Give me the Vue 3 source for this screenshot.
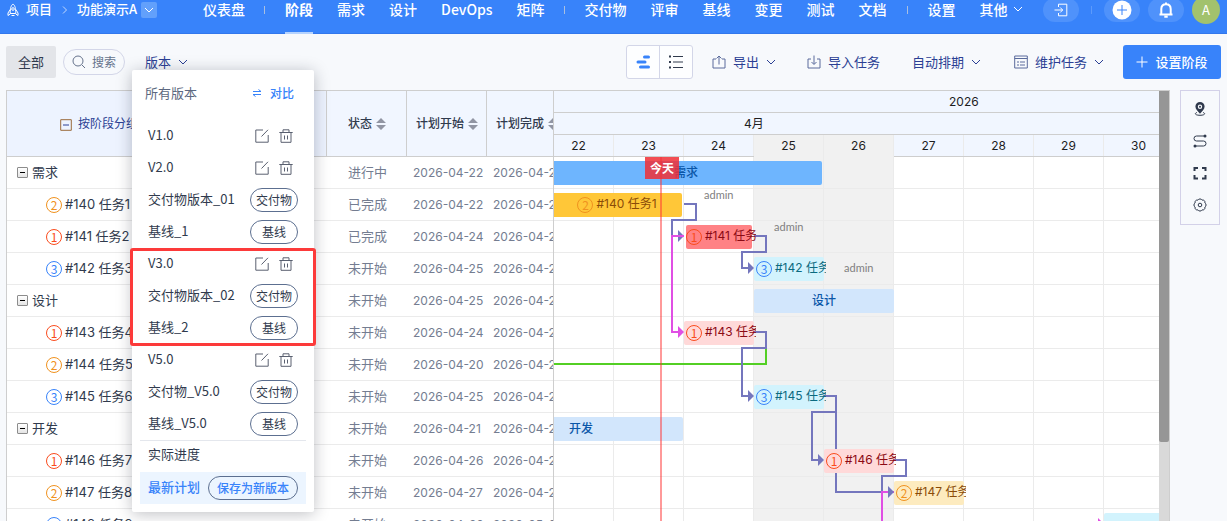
<script setup>
import { ref } from 'vue'

const nav = [
  ['仪表盘'],
  ['阶段', '需求', '设计', 'DevOps', '矩阵'],
  ['交付物', '评审', '基线', '变更', '测试', '文档'],
  ['设置', '其他'],
]
const search = ref('')

const rows = [
  { stage: '需求', status: '进行中', start: '2026-04-22', end: '2026-04-25' },
  { no: 2, id: '#140', name: '任务', n: 1, status: '已完成', start: '2026-04-22', end: '2026-04-23' },
  { no: 1, id: '#141', name: '任务', n: 2, status: '已完成', start: '2026-04-24', end: '2026-04-24' },
  { no: 3, id: '#142', name: '任务', n: 3, status: '未开始', start: '2026-04-25', end: '2026-04-25' },
  { stage: '设计', status: '未开始', start: '2026-04-25', end: '2026-04-26' },
  { no: 1, id: '#143', name: '任务', n: 4, status: '未开始', start: '2026-04-24', end: '2026-04-24' },
  { no: 2, id: '#144', name: '任务', n: 5, status: '未开始', start: '2026-04-20', end: '2026-04-20' },
  { no: 3, id: '#145', name: '任务', n: 6, status: '未开始', start: '2026-04-25', end: '2026-04-25' },
  { stage: '开发', status: '未开始', start: '2026-04-21', end: '2026-04-23' },
  { no: 1, id: '#146', name: '任务', n: 7, status: '未开始', start: '2026-04-26', end: '2026-04-26' },
  { no: 2, id: '#147', name: '任务', n: 8, status: '未开始', start: '2026-04-27', end: '2026-04-27' },
  { no: 3, id: '#148', name: '任务', n: 9, status: '未开始', start: '2026-04-30', end: '2026-05-03' },
]

const days = [22, 23, 24, 25, 26, 27, 28, 29, 30]

const bars = [
  { row: 0, x: 6, w: 272, kind: 'stage-on', label: '需求' },
  { row: 1, x: 6, w: 132, kind: 'amber', no: 2, id: '#140', n: '1', wide: true },
  { row: 2, x: 142, w: 66, kind: 'red', no: 1, id: '#141', n: '' },
  { row: 3, x: 210, w: 70, kind: 'cyan', no: 3, id: '#142', n: '' },
  { row: 4, x: 210, w: 140, kind: 'stage', label: '设计' },
  { row: 5, x: 140, w: 70, kind: 'pink', no: 1, id: '#143', n: '' },
  { row: 7, x: 210, w: 70, kind: 'cyan', no: 3, id: '#145', n: '' },
  { row: 8, x: -65, w: 204, kind: 'stage', label: '开发' },
  { row: 9, x: 280, w: 70, kind: 'pink', no: 1, id: '#146', n: '' },
  { row: 10, x: 350, w: 70, kind: 'sand', no: 2, id: '#147', n: '' },
  { row: 11, x: 560, w: 280, kind: 'cyan', label: '' },
]
const owners = [
  { x: 160, y: 30 },
  { x: 230, y: 62 },
  { x: 300, y: 103 },
]

const versions = [
  { name: 'V1.0' },
  { name: 'V2.0' },
  { name: '交付物版本_01', tag: '交付物' },
  { name: '基线_1', tag: '基线' },
  { name: 'V3.0' },
  { name: '交付物版本_02', tag: '交付物' },
  { name: '基线_2', tag: '基线' },
  { name: 'V5.0' },
  { name: '交付物_V5.0', tag: '交付物' },
  { name: '基线_V5.0', tag: '基线' },
]
const groups = [versions.slice(0, 4), versions.slice(4, 7), versions.slice(7)]
</script>

<template>
  <div class="page">
    <header class="top">
      <div class="top-in">
        <svg class="logo" viewBox="0 0 12 14" width="12" height="14">
          <path d="M6 1C4 2.500 3.200 5 3.200 10.500H8.800C8.800 5 8 2.500 6 1ZM3.200 6.500L1 10V12.500L3.200 11M8.800 6.500L11 10V12.500L8.800 11M4.500 12.500H7.500" />
          <circle cx="6" cy="6" r="1.300" />
        </svg>
        <a href="#" class="crumb first">项目</a>
        <svg class="crumb-sep" viewBox="0 0 6 8" width="6" height="8"><path d="M1 .5L4.500 4L1 7.500" /></svg>
        <a href="#" class="crumb">功能演示A</a>
        <button class="crumb-more" aria-label="切换项目">
          <svg class="chev" viewBox="0 0 10 6" width="10" height="6"><path d="M1 1L5 5L9 1" /></svg>
        </button>
        <nav class="nav">
          <template v-for="(g, gi) in nav" :key="gi">
            <i v-if="gi" class="nav-div"></i>
            <a v-for="t in g" :key="t" href="#" :class="{ active: t === '阶段' }">{{ t
              }}<svg v-if="t === '其他'" class="chev" viewBox="0 0 10 6" width="10" height="6"><path d="M1 1L5 5L9 1" /></svg></a>
          </template>
        </nav>
        <div class="top-right">
          <button class="pill" aria-label="退出项目">
            <svg viewBox="0 0 14 14" width="14" height="14"><path d="M4.500 4V1.200H12.800V12.800H4.500V10M.5 7H8.500M6.200 4.500L8.700 7L6.200 9.500" /></svg>
          </button>
          <i class="right-div"></i>
          <button class="pill" aria-label="新建">
            <svg viewBox="0 0 20 20" width="20" height="20"><circle class="disc" cx="10" cy="10" r="9.500" /><path class="plus-blue" d="M10 5V15M5 10H15" /></svg>
          </button>
          <button class="pill" aria-label="通知">
            <svg class="bell" viewBox="0 0 16 16" width="16" height="16"><path d="M1.500 12.500H14.500M3.300 12.300V7C3.300 4 5.300 2.200 8 2.200S12.700 4 12.700 7V12.300M8 .5V2M6.300 14.800H9.700" /></svg>
          </button>
          <span class="avatar">A</span>
        </div>
      </div>
    </header>

    <div class="bar-tools">
      <button class="all">全部</button>
      <label class="search">
        <svg viewBox="0 0 14 14" width="14" height="14"><circle cx="6" cy="6" r="5" /><path d="M10 10L13 13" /></svg>
        <input v-model="search" type="text" placeholder="搜索" aria-label="搜索" />
      </label>
      <button class="link version">版本<svg class="chev" viewBox="0 0 10 6" width="10" height="6"><path d="M1 1L5 5L9 1" /></svg></button>

      <div class="tools-right">
        <div class="toggle">
          <button aria-label="甘特图">
            <svg viewBox="0 0 14 14" width="14" height="14"><path class="gantt-ic" d="M8.500 2H12.500M2 7H9M4.500 12H12.500" /></svg>
          </button>
          <button aria-label="列表">
            <svg viewBox="0 0 16 14" width="16" height="14"><path class="list-ic" d="M5 1.500H15M5 7H15M5 12.500H15" /><path class="list-dot" d="M1 1.500H3M1 7H3M1 12.500H3" /></svg>
          </button>
        </div>
        <button class="link export">
          <svg class="ic" viewBox="0 0 14 14" width="14" height="14"><path d="M4 4H1V13H13V4H10M7 9.500V1.200M4.500 3.500L7 1L9.500 3.500" /></svg>导出<svg class="chev" viewBox="0 0 10 6" width="10" height="6"><path d="M1 1L5 5L9 1" /></svg>
        </button>
        <button class="link import">
          <svg class="ic" viewBox="0 0 14 14" width="14" height="14"><path d="M4 4H1V13H13V4H10M7 .5V9M4.500 7L7 9.500L9.500 7" /></svg>导入任务
        </button>
        <button class="link auto">自动排期<svg class="chev" viewBox="0 0 10 6" width="10" height="6"><path d="M1 1L5 5L9 1" /></svg></button>
        <button class="link maintain">
          <svg class="ic" viewBox="0 0 14 14" width="14" height="14"><path d="M.7 1H13.300V13H.7ZM.7 3.500H13.300M3 7H5M6 7H11M3 10H5M6 10H11" /></svg>维护任务<svg class="chev" viewBox="0 0 10 6" width="10" height="6"><path d="M1 1L5 5L9 1" /></svg>
        </button>
        <button class="primary">
          <svg viewBox="0 0 12 12" width="12" height="12"><path d="M6 .5V11.500M.5 6H11.500" /></svg>设置阶段
        </button>
      </div>
    </div>

    <main class="body">
      <section class="gantt">
        <div class="grid-pane">
          <table>
            <colgroup><col class="c-name" /><col class="c-mid" /><col class="c-mid" /><col class="c-mid" /></colgroup>
            <thead>
              <tr>
                <th class="group">
                  <svg viewBox="0 0 12 12" width="12" height="12"><path class="g-box" d="M.7 .7H11.300V11.300H.7Z" /><path class="g-minus" d="M3 6H9" /></svg>按阶段分组
                </th>
                <th v-for="h in ['状态', '计划开始', '计划完成']" :key="h">
                  <span class="th-in" :class="{ mid: h === '状态' }"><span class="lift">{{ h }}</span><svg viewBox="0 0 10 12" width="10" height="12"><path d="M5 0L10 5H0ZM5 12L0 7H10Z" /></svg></span>
                </th>
              </tr>
            </thead>
            <tbody>
              <tr v-for="(r, i) in rows" :key="i">
                <td>
                  <span v-if="r.stage" class="stage-cell"><button class="fold" :aria-label="'折叠' + r.stage"></button><span class="lift">{{ r.stage }}</span></span>
                  <span v-else class="task-cell"><b class="no" :class="'p' + r.no">{{ r.no }}</b><span class="lift">{{ r.id }} {{ r.name }}{{ r.n }}</span></span>
                </td>
                <td class="status"><span class="lift">{{ r.status }}</span></td>
                <td class="date">{{ r.start }}</td>
                <td class="date">{{ r.end }}</td>
              </tr>
            </tbody>
          </table>
        </div>

        <div class="chart-pane">
          <div class="scale year"><span>2026</span></div>
          <div class="scale month"><span>4月</span></div>
          <div class="scale days">
            <span v-for="d in days" :key="d" :class="{ off: d === 25 || d === 26 }">{{ d }}</span>
          </div>
          <div class="canvas">
            <div class="cols">
              <span v-for="d in days" :key="d" :class="{ off: d === 25 || d === 26 }"></span>
            </div>
            <div class="lines"><i v-for="(r, i) in rows" :key="i"></i></div>
            <svg class="wires" viewBox="0 0 640 384" width="640" height="384">
              <g class="violet">
                <path d="M140 47H152V63H128V79H136" /><path class="tip" d="M134 73L140 79L134 85Z" />
                <path d="M210 79H222V95H198V111H206" /><path class="tip" d="M204 105L210 111L204 117Z" />
              </g>
              <path class="green" d="M0 207H222V191" />
              <g class="violet">
                <path d="M210 175H222V191H198V239H206" /><path class="tip" d="M204 233L210 239L204 245Z" />
                <path d="M280 239H292V255H268V303H276" /><path class="tip" d="M274 297L280 303L274 309Z" />
                <path d="M292 255V335H346" />
                <path d="M350 303H362V319H338V335" />
              </g>
              <g class="magenta">
                <path d="M140 79H128V175H136" /><path class="tip" d="M134 169L140 175L134 181Z" />
                <path d="M350 335H338V384" />
                <path class="tip" d="M554 361L560 367L554 373Z" />
              </g>
              <g class="violet">
                <path class="tip" d="M344 329L350 335L344 341Z" />
              </g>
            </svg>
            <div
              v-for="(b, i) in bars"
              :key="i"
              class="bar"
              :class="[b.kind, { wide: b.wide || b.label }]"
              :style="{ left: b.x + 'px', top: b.row * 32 + 4 + 'px', width: b.w + 'px' }"
            >
              <template v-if="b.no"><span class="bar-in"><b class="no" :class="'p' + b.no">{{ b.no }}</b><span class="lift">{{ b.id }} 任务{{ b.n }}</span></span></template>
              <template v-else>{{ b.label }}</template>
            </div>
            <span v-for="o in owners" :key="o.x" class="owner" :style="{ left: o.x + 'px', top: o.y + 'px' }">admin</span>
            <div class="today"><span>今天</span></div>
          </div>
        </div>
        <div class="scroll"><i></i></div>
      </section>

      <aside class="side">
        <button aria-label="定位">
          <svg viewBox="0 0 14 14" width="14" height="14"><path class="solid" fill-rule="evenodd" d="M7 0A4.600 4.600 0 0 1 11.600 4.600C11.600 7.500 9 9.500 7 11.800C5 9.500 2.400 7.500 2.400 4.600A4.600 4.600 0 0 1 7 0ZM7 2.500A2.200 2.200 0 1 0 7 6.900A2.200 2.200 0 1 0 7 2.500Z" /><circle class="solid" cx="7" cy="4.700" r="1" /><path d="M4 10.500C1.500 11 1.500 13.300 7 13.300S12.500 11 10 10.500" /></svg>
        </button>
        <button aria-label="关联线">
          <svg viewBox="0 0 14 14" width="14" height="14"><path d="M12 2H3.500A2.400 2.400 0 0 0 3.500 7H10.500A2.400 2.400 0 0 1 10.500 12H2" /><circle class="solid" cx="12" cy="2" r="1.500" /><circle class="solid" cx="2" cy="12" r="1.500" /></svg>
        </button>
        <button aria-label="全屏">
          <svg viewBox="0 0 14 14" width="14" height="14"><path class="thick" d="M1.500 5V2H5M9 2H12.500V5M12.500 9V12.500H9M5 12.500H1.500V9" /></svg>
        </button>
        <button aria-label="配置">
          <svg viewBox="0 0 14 14" width="14" height="14"><path d="M9 2.100A2.300 2.300 0 0 1 11.900 5A2.300 2.300 0 0 1 11.900 9A2.300 2.300 0 0 1 9 11.900A2.300 2.300 0 0 1 5 11.900A2.300 2.300 0 0 1 2.100 9A2.300 2.300 0 0 1 2.100 5A2.300 2.300 0 0 1 5 2.100A2.300 2.300 0 0 1 9 2.100Z" /><circle cx="7" cy="7" r="1.800" /></svg>
        </button>
      </aside>
    </main>

    <div class="menu">
      <div class="menu-head">
        <span>所有版本</span>
        <a href="#"><svg viewBox="0 0 8 8" width="8" height="8"><path d="M0 2.500H8L5.500 .5M8 5.500H0L2.500 7.500" /></svg>对比</a>
      </div>
      <ul v-for="(g, gi) in groups" :key="gi" :class="{ marked: gi === 1 }">
        <li v-for="v in g" :key="v.name">
          <span class="lift">{{ v.name }}</span>
          <button v-if="v.tag" class="tag">{{ v.tag }}</button>
          <span v-else class="acts">
            <button :aria-label="'编辑' + v.name"><svg viewBox="0 0 14 14" width="14" height="14"><path d="M8 1H.8V13.200H13.200V6M6.500 7.500L13 .8" /></svg></button>
            <button :aria-label="'删除' + v.name"><svg viewBox="0 0 14 14" width="14" height="14"><path d="M.3 3.500H13.700M4 3.300V.8H10V3.300M2 3.500V13.300H12V3.500M5.500 6.500V10.500M8.500 6.500V10.500" /></svg></button>
          </span>
        </li>
      </ul>
      <div class="progress">实际进度</div>
      <div class="latest"><span class="lift">最新计划</span><button class="tag">保存为新版本</button></div>
    </div>
  </div>
</template>

<style>
body {
  background: #f7f9fc;
}
</style>

<style scoped>
* {
  box-sizing: border-box;
}
.page {
  position: relative;
  display: flex;
  flex-direction: column;
  height: 100vh;
  overflow: hidden;
  font: 13px/20px "Noto Sans CJK SC", sans-serif;
  color: #303a4d;
}
a {
  color: inherit;
  text-decoration: none;
}
button {
  padding: 0;
  border: 0;
  background: none;
  font: inherit;
  color: inherit;
  white-space: nowrap;
}
svg {
  display: block;
  flex: none;
  fill: none;
  stroke: currentColor;
}
.lift {
  display: block;
  padding-bottom: 2px;
}
.top {
  flex: none;
  height: 34px;
  overflow: hidden;
  background: #3883fa;
  box-shadow: inset 0 -1px #3277ec;
  color: #fff;
}
.top-in {
  display: flex;
  align-items: center;
  height: 48px;
  margin-top: -14px;
  padding: 0 7px;
}
.crumb {
  padding-bottom: 2px;
  font-weight: 500;
  white-space: nowrap;
}
.crumb.first {
  margin-left: 7px;
}
.crumb-sep {
  margin: 0 9px 0 10px;
  opacity: .7;
}
.crumb-more {
  display: flex;
  align-items: center;
  justify-content: center;
  width: 16px;
  height: 16px;
  margin-left: 4px;
  border-radius: 2px;
  background: #62a0fb;
}
.nav {
  display: flex;
  align-items: center;
  align-self: stretch;
  margin-left: 34px;
  font-size: 14px;
  font-weight: 500;
}
.nav a {
  position: relative;
  display: flex;
  align-items: center;
  gap: 5px;
  height: 48px;
  margin: 0 12px;
  padding-bottom: 2px;
  white-space: nowrap;
}
.nav a.active {
  font-weight: 700;
}
.nav a.active::after {
  content: "";
  position: absolute;
  inset: auto 0 0;
  height: 2px;
  background: #b5d3fe;
}
.nav-div {
  width: 1px;
  height: 8px;
  margin: 0 8px 0 7px;
  background: #a9bfe0;
}
.nav-div:last-of-type {
  margin-left: 8px;
}
.top-right {
  display: flex;
  align-items: center;
  gap: 8px;
  margin-left: auto;
}
.pill {
  display: flex;
  align-items: center;
  justify-content: center;
  width: 36px;
  height: 24px;
  border-radius: 12px;
  background: #4f92fb;
}
.right-div {
  width: 1px;
  height: 8px;
  margin: 0 4px;
  background: #5c9afb;
}
.disc {
  fill: #fff;
  stroke: none;
}
.plus-blue {
  stroke: #3883fa;
}
.bell {
  stroke-width: 2;
}
.avatar {
  width: 28px;
  height: 28px;
  border-radius: 50%;
  background: #a2c26d;
  line-height: 28px;
  text-align: center;
}
.bar-tools {
  display: flex;
  flex: none;
  align-items: center;
  height: 56px;
  padding: 0 6px;
}
.all {
  width: 50px;
  height: 32px;
  border-radius: 2px;
  background: #e3e5e9;
}
.search {
  display: flex;
  align-items: center;
  gap: 6px;
  width: 62px;
  height: 26px;
  margin-left: 7px;
  padding-left: 8px;
  border: 1px solid #d3d6e8;
  border-radius: 13px;
  color: #66738c;
}
.search input {
  width: 28px;
  padding: 0;
  border: 0;
  outline: 0;
  background: none;
  font: 12px/20px "Noto Sans CJK SC", sans-serif;
}
.search input::placeholder {
  color: #66738c;
}
.link {
  display: flex;
  align-items: center;
  color: #2b3f94;
}
.link .chev {
  margin-left: 7px;
}
.link .ic {
  margin-right: 7px;
  color: #5a6b9c;
}
.version {
  margin-left: 20px;
}
.tools-right {
  display: flex;
  align-items: center;
  margin-left: auto;
}
.toggle {
  display: flex;
  margin-right: 19px;
  border: 1px solid #d3d6e8;
  border-radius: 3px;
  background: #fdfeff;
}
.toggle button {
  display: flex;
  align-items: center;
  justify-content: center;
  width: 32px;
  height: 32px;
}
.toggle button + button {
  width: 33px;
  border-left: 1px solid #d3d6e8;
}
.gantt-ic {
  stroke: #3883fa;
  stroke-width: 3;
  stroke-linecap: round;
}
.list-ic,
.list-dot {
  stroke: #303a4d;
}
.list-dot {
  stroke-width: 2;
}
.import {
  margin-left: 31px;
}
.auto {
  margin-left: 32px;
}
.maintain {
  margin: 0 19px 0 33px;
}
.primary {
  display: flex;
  align-items: center;
  justify-content: center;
  gap: 7px;
  width: 98px;
  height: 34px;
  border-radius: 3px;
  background: #3883fa;
  color: #fff;
  font-weight: 500;
}
.body {
  display: flex;
  flex: 1;
  align-items: flex-start;
  gap: 10px;
  min-height: 0;
  padding: 0 7px 0 6px;
}
.gantt {
  display: flex;
  flex: 1;
  min-width: 0;
  height: 100%;
  border: solid #cecece;
  border-width: 1px 1px 0;
  background: #fff;
  overflow: hidden;
}
.grid-pane {
  flex: 0 0 547px;
  overflow: hidden;
  border-right: 1px solid #cecece;
}
table {
  width: 560px;
  border-collapse: separate;
  border-spacing: 0;
  table-layout: fixed;
}
.c-name {
  width: 320px;
}
.c-mid {
  width: 80px;
}
th {
  height: 66px;
  padding: 0;
  border-right: 1px solid #cecece;
  border-bottom: 1px solid #cecece;
  background: #f1f6ff;
  font-size: 12px;
  font-weight: 500;
  text-align: left;
}
.group {
  background: #edf3ff;
  color: #2b3f94;
}
th.group {
  padding: 0 0 2px 53px;
  font-weight: 400;
}
.group svg {
  display: inline-block;
  margin-right: 6px;
  vertical-align: -3px;
}
.g-box {
  stroke: #9a6b3c;
}
.g-minus {
  stroke: #2b3f94;
}
.th-in {
  display: flex;
  align-items: center;
  gap: 4px;
  padding-left: 9px;
}
.th-in.mid {
  padding-left: 21px;
}
.th-in svg {
  fill: #9195a3;
  stroke: none;
}
td {
  height: 32px;
  padding: 0;
  border-bottom: 1px solid #ebebeb;
  line-height: 20px;
  white-space: nowrap;
}
.stage-cell,
.task-cell,
.bar-in {
  display: flex;
  align-items: center;
}
.stage-cell {
  gap: 4px;
  padding-left: 10px;
}
.task-cell {
  padding-left: 39px;
  white-space: pre;
}
.task-cell,
.date,
.bar,
.scale {
  font-family: Inter, "Noto Sans CJK SC", sans-serif;
}
.fold {
  display: flex;
  align-items: center;
  justify-content: center;
  width: 11px;
  height: 11px;
  border: 1px solid #8c8c8c;
  border-radius: 1px;
  background: linear-gradient(#fff, #e4e4e4);
}
.fold::before {
  content: "";
  width: 5px;
  height: 1px;
  background: #000;
}
.no {
  flex: none;
  width: 16px;
  height: 16px;
  margin-right: 3px;
  border: 1px solid;
  border-radius: 50%;
  font: 400 12px/14px "Noto Sans CJK SC", sans-serif;
  text-align: center;
}
.p1 {
  color: #fa4c1e;
}
.p2 {
  color: #f0921f;
}
.p3 {
  color: #3883fa;
}
.status {
  padding-left: 21px;
  color: #747d91;
}
.date {
  padding-left: 6px;
  font-size: 12px;
  color: #747d91;
}
.chart-pane {
  flex: 1;
  min-width: 0;
  overflow: hidden;
}
.scale {
  position: relative;
  height: 22px;
  border-bottom: 1px solid #cecece;
  background: #f1f6ff;
  color: #1d1d1f;
  font-size: 12px;
  line-height: 21px;
}
.year span {
  margin-left: 395px;
}
.month span {
  margin-left: 190px;
}
.days {
  display: flex;
  margin-left: -10px;
}
.days span,
.cols span {
  flex: 0 0 70px;
  border-right: 1px solid #ebebeb;
  text-align: center;
}
.days .off {
  height: 22px;
}
.off {
  background: #f1f1f1;
}
.canvas {
  position: relative;
  height: 384px;
  margin-left: -10px;
}
.cols,
.lines,
.wires {
  position: absolute;
  inset: 0;
}
.cols {
  display: flex;
}
.lines i {
  display: block;
  height: 32px;
  border-bottom: 1px solid #ebebeb;
}
.wires path {
  stroke-width: 2;
}
.wires .tip {
  stroke: none;
}
.violet {
  stroke: #7476bd;
}
.violet .tip {
  fill: #7476bd;
}
.magenta {
  stroke: #e04fe4;
}
.magenta .tip {
  fill: #e04fe4;
}
.green {
  stroke: #53cf24;
}
.bar {
  position: absolute;
  display: flex;
  align-items: center;
  height: 24px;
  border-radius: 2px;
  font-size: 12px;
  white-space: pre;
}
.stage,
.stage-on {
  font-weight: 500;
}
.wide {
  justify-content: center;
}
.bar-in {
  padding-left: 2px;
}
.bar:not(.wide) .bar-in {
  flex: 0 0 72px;
  overflow: hidden;
}
.red .bar-in {
  margin-left: -2px;
}
.stage-on {
  background: #6eb5fe;
  color: #0b57a8;
}
.stage {
  background: #d2e6fc;
  color: #0b57a8;
}
.amber {
  background: #ffc738;
  color: #8a4b08;
}
.red {
  background: #ff8285;
  color: #8c0a14;
}
.pink {
  background: #ffd9d9;
  color: #8c0a14;
}
.cyan {
  background: #d2f3fd;
  color: #0b6a80;
}
.sand {
  background: #fdebbf;
  color: #8a4b08;
}
.owner {
  position: absolute;
  font-family: Lato, sans-serif;
  font-size: 11px;
  line-height: 16px;
  color: #808080;
}
.today {
  position: absolute;
  top: 0;
  bottom: 0;
  left: 116px;
  width: 2px;
  background: rgba(255, 52, 52, .5);
}
.today span {
  position: absolute;
  top: 0;
  left: -15px;
  width: 34px;
  height: 22px;
  background: rgba(240, 48, 56, .86);
  color: #fff;
  font-size: 12px;
  font-weight: 700;
  line-height: 22px;
  text-align: center;
}
.scroll {
  flex: 0 0 10px;
  background: #d9d9d9;
}
.scroll i {
  display: block;
  height: 351px;
  border-radius: 0 0 2px 2px;
  background: #969696;
}
.side {
  display: flex;
  flex: none;
  flex-direction: column;
  width: 40px;
  padding: 2px 0 3px;
  border: 1px solid #d3d1e8;
}
.side button {
  display: flex;
  align-items: center;
  justify-content: center;
  height: 32px;
}
.side .solid {
  fill: #303a4d;
  stroke: none;
}
.side .thick {
  stroke-width: 2;
}
.menu {
  position: absolute;
  top: 70px;
  left: 132px;
  width: 182px;
  padding: 8px;
  border-radius: 2px;
  background: #fff;
  box-shadow: 0 2px 16px rgba(20, 25, 40, .28);
}
.menu-head {
  display: flex;
  align-items: center;
  justify-content: space-between;
  height: 30px;
  margin-bottom: 12px;
  padding: 0 12px 0 5px;
  color: #5c6880;
}
.menu-head a {
  display: flex;
  align-items: center;
  gap: 9px;
  color: #3883fa;
  font-size: 12px;
  font-weight: 500;
}
ul {
  margin: 0;
  padding: 0;
  list-style: none;
}
.marked {
  position: relative;
}
.marked::after {
  content: "";
  position: absolute;
  inset: 0 -10px -2px;
  border: 3px solid #fc3a3a;
  border-radius: 3px;
  pointer-events: none;
}
li,
.latest {
  display: flex;
  align-items: center;
  justify-content: space-between;
  height: 32px;
  padding: 0 8px;
}
.acts {
  display: flex;
  gap: 10px;
  padding-right: 5px;
  color: #5a6070;
}
.tag {
  height: 24px;
  min-width: 48px;
  padding: 0 5px 1px;
  border: 1px solid #5c6f90;
  border-radius: 12px;
  font-size: 12px;
  line-height: 20px;
}
.progress {
  height: 32px;
  padding: 3px 8px;
  border-top: 1px solid #e4e7ed;
}
.latest {
  background: #ecf5ff;
  color: #3883fa;
  font-weight: 500;
}
.latest .tag {
  padding: 0 8px 1px;
  font-weight: 500;
}
</style>
